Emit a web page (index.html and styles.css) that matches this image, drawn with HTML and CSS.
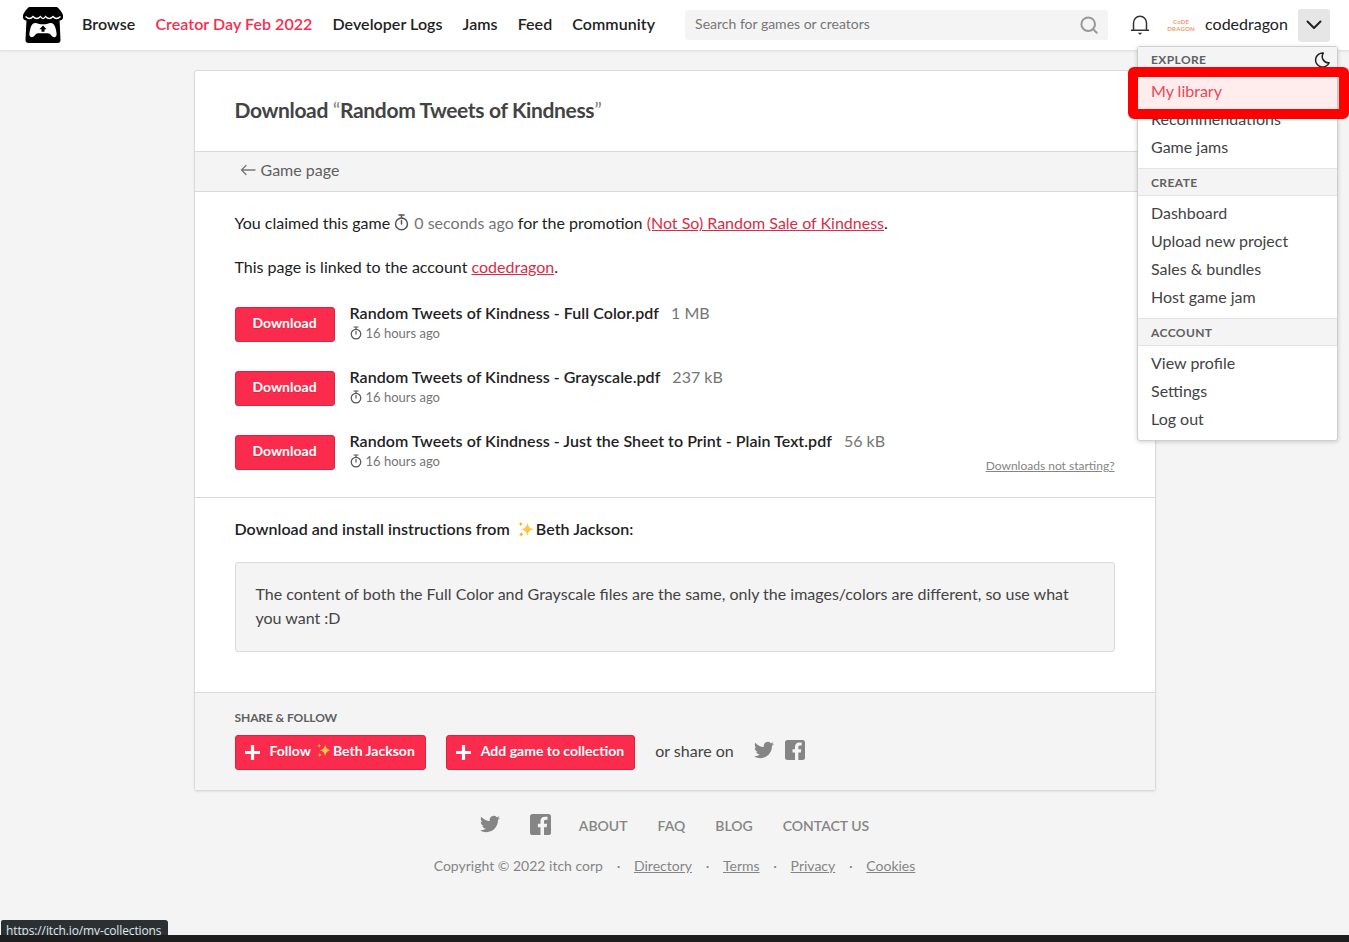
FILE: index.html
```html
<!DOCTYPE html>
<html lang="en">
<head>
<meta charset="utf-8">
<title>Download Random Tweets of Kindness</title>
<link rel="stylesheet" href="styles.css">
</head>
<body>
<svg class="defs" width="0" height="0" aria-hidden="true">
  <symbol id="i-clock" viewBox="0 0 14 16"><g fill="none" stroke="currentColor" stroke-width="1.4" stroke-linecap="round"><circle cx="7" cy="9.3" r="5.6"/><path d="M4.6 1h4.8M7 1v2.6M7 9.3V6.2"/></g></symbol>
  <symbol id="i-plus" viewBox="0 0 14 14"><path d="M7 0v14M0 7h14" fill="none" stroke="currentColor" stroke-width="3"/></symbol>
  <symbol id="i-spark" viewBox="0 0 18 18"><path fill="#fdc643" d="M11 1.500c.8 4.600 2.300 6.200 6.800 7.200-4.500 1-6 2.700-6.800 7.300-.8-4.600-2.300-6.300-6.800-7.300 4.500-1 6-2.600 6.800-7.200z"/><path fill="#f6ae2d" d="M4 .5c.3 1.700 1 2.400 2.600 2.800C5 3.700 4.300 4.400 4 6.100c-.3-1.700-1-2.400-2.600-2.800C3 2.900 3.700 2.200 4 .5zM4.500 11.500c.4 1.800 1 2.400 2.600 2.800-1.600.4-2.200 1-2.600 2.900-.4-1.900-1-2.500-2.600-2.900 1.600-.4 2.200-1 2.600-2.800z"/></symbol>
  <symbol id="i-tw" viewBox="0 0 24 24"><path fill="currentColor" d="M23.953 4.570a10 10 0 01-2.825.775 4.958 4.958 0 002.163-2.723c-.951.555-2.005.959-3.127 1.184a4.920 4.920 0 00-8.384 4.482C7.690 8.095 4.067 6.130 1.640 3.162a4.822 4.822 0 00-.666 2.475c0 1.710.870 3.213 2.188 4.096a4.904 4.904 0 01-2.228-.616v.060a4.923 4.923 0 003.946 4.827 4.996 4.996 0 01-2.212.085 4.936 4.936 0 004.604 3.417 9.867 9.867 0 01-6.102 2.105c-.390 0-.779-.023-1.170-.067a13.995 13.995 0 007.557 2.209c9.053 0 13.998-7.496 13.998-13.985 0-.210 0-.420-.015-.630A9.935 9.935 0 0024 4.590z"/></symbol>
  <symbol id="i-fb" viewBox="0 0 24 24"><path fill="currentColor" d="M3 0h18a3 3 0 013 3v18a3 3 0 01-3 3h-5v-9h3l.5-4H16V8.500c0-1.100.4-2 2-2h2V3h-3c-3.300 0-5 2-5 5v3H9v4h3v9H3a3 3 0 01-3-3V3a3 3 0 013-3z"/></symbol>
</svg>

<header class="topbar">
  <a class="logo" href="#" aria-label="itch.io">
    <svg viewBox="0 0 40 36" width="40" height="36">
      <path fill="#000" d="M6 0h28c2 1.500 5 5 6 8v2.500c0 1.800-1.700 3-3.400 3h-33.200C1.700 13.500 0 12.300 0 10.500V8c1-3 4-6.500 6-8z"/>
      <path fill="#000" d="M3.500 12h33l1 21c0 1.800-1 3-3 3h-29c-2 0-3-1.200-3-3z"/>
      <path fill="none" stroke="#fff" stroke-width="1.300" d="M2.500 9.500q4.300 4 7.500 0q3.700 4 7.500 0q2.500 4 5 0q3.800 4 7.500 0q3.200 4 7.500 0"/>
      <path fill="#fff" d="M12.500 16c2.300 0 3.500 1.300 5 1.300h5c1.500 0 2.700-1.300 5-1.300 2.800 0 4.300 2 5.200 5.700.8 3.300 1.400 6.300.4 7.600-1.300 1.500-3.300.9-4.800-.8-1.200-1.500-2-2.200-3.500-2.200h-9.600c-1.500 0-2.300.7-3.500 2.200-1.500 1.700-3.500 2.300-4.800.8-1-1.300-.4-4.300.4-7.600.9-3.700 2.400-5.700 5.200-5.700z"/>
      <path fill="#000" d="M20 18.500l3.600 3.700h-2.100v2.600h-3v-2.600h-2.100z"/>
    </svg>
  </a>
  <nav class="mainnav">
    <a href="#">Browse</a>
    <a href="#" class="hot">Creator Day Feb 2022</a>
    <a href="#">Developer Logs</a>
    <a href="#">Jams</a>
    <a href="#">Feed</a>
    <a href="#">Community</a>
  </nav>
  <div class="search">
    <span>Search for games or creators</span>
    <svg viewBox="0 0 20 20" width="20" height="20"><g fill="none" stroke="#999" stroke-width="2" stroke-linecap="round"><circle cx="9.200" cy="9.200" r="6.800"/><path d="M14.200 14.200l3.500 3.500"/></g></svg>
  </div>
  <div class="userbox">
    <svg class="bell" viewBox="0 0 20 22" width="20" height="22"><g fill="none" stroke="#333" stroke-width="1.500" stroke-linecap="round" stroke-linejoin="round"><path d="M1.500 16.300h17M3.500 16.300V9.500C3.500 5.300 6.200 2.200 10 2.200s6.500 3.100 6.500 6.800v7.300"/></g><path d="M7.800 18.800h4.400L10 21z" fill="#333"/></svg>
    <div class="avatar"><span>CoDE</span><span>DRAGON</span></div>
    <span class="username">codedragon</span>
    <button class="menubtn" aria-label="Menu"><svg viewBox="0 0 16 10" width="16" height="10"><path d="M1.500 1.500L8 8l6.500-6.500" fill="none" stroke="#222" stroke-width="2" stroke-linecap="round" stroke-linejoin="round"/></svg></button>
  </div>
</header>

<main class="card">
  <section class="card-title">
    <h2>Download <span class="q">“</span>Random Tweets of Kindness<span class="q">”</span></h2>
  </section>
  <div class="backbar">
    <svg viewBox="0 0 16 12" width="16" height="12"><path d="M15 6H1.500M6 1.500L1.500 6 6 10.500" fill="none" stroke="#777" stroke-width="1.300" stroke-linecap="round" stroke-linejoin="round"/></svg>
    <a href="#">Game page</a>
  </div>
  <section class="downloads">
    <p class="claim">You claimed this game <svg class="clock-lg"><use href="#i-clock"/></svg> <span class="muted">0 seconds ago</span> for the promotion <a href="#">(Not So) Random Sale of Kindness</a>.</p>
    <p class="claim second">This page is linked to the account <a href="#">codedragon</a>.</p>
    <div class="uploads">
      <div class="upload">
        <a class="btn" href="#">Download</a>
        <div class="info">
          <div class="fname"><strong>Random Tweets of Kindness - Full Color.pdf</strong><span class="size">1 MB</span></div>
          <div class="when"><svg class="clock"><use href="#i-clock"/></svg>16 hours ago</div>
        </div>
      </div>
      <div class="upload">
        <a class="btn" href="#">Download</a>
        <div class="info">
          <div class="fname"><strong>Random Tweets of Kindness - Grayscale.pdf</strong><span class="size">237 kB</span></div>
          <div class="when"><svg class="clock"><use href="#i-clock"/></svg>16 hours ago</div>
        </div>
      </div>
      <div class="upload">
        <a class="btn" href="#">Download</a>
        <div class="info">
          <div class="fname"><strong>Random Tweets of Kindness - Just the Sheet to Print - Plain Text.pdf</strong><span class="size">56 kB</span></div>
          <div class="when"><svg class="clock"><use href="#i-clock"/></svg>16 hours ago</div>
        </div>
        <a class="notstarting" href="#">Downloads not starting?</a>
      </div>
    </div>
  </section>
  <section class="instructions">
    <h3>Download and install instructions from <svg class="spark"><use href="#i-spark"/></svg>Beth Jackson:</h3>
    <div class="note">The content of both the Full Color and Grayscale files are the same, only the images/colors are different, so use what you want :D</div>
  </section>
  <section class="share">
    <div class="share-label">SHARE &amp; FOLLOW</div>
    <div class="share-row">
      <a class="btn btn-icon" href="#"><svg class="plus"><use href="#i-plus"/></svg>Follow <svg class="spark-sm"><use href="#i-spark"/></svg>Beth Jackson</a>
      <a class="btn btn-icon" href="#"><svg class="plus"><use href="#i-plus"/></svg>Add game to collection</a>
      <span class="orshare">or share on</span>
      <svg class="soc tw"><use href="#i-tw"/></svg>
      <svg class="soc fb"><use href="#i-fb"/></svg>
    </div>
  </section>
</main>

<footer class="foot">
  <div class="foot-links">
    <svg class="ftw"><use href="#i-tw"/></svg>
    <svg class="ffb"><use href="#i-fb"/></svg>
    <a href="#">ABOUT</a>
    <a href="#">FAQ</a>
    <a href="#">BLOG</a>
    <a href="#">CONTACT US</a>
  </div>
  <div class="copy">
    <span>Copyright © 2022 itch corp</span><i>·</i><a href="#">Directory</a><i>·</i><a href="#">Terms</a><i>·</i><a href="#">Privacy</a><i>·</i><a href="#">Cookies</a>
  </div>
</footer>

<aside class="menu">
  <div class="mhead first">EXPLORE
    <svg class="moon" viewBox="0 0 16 16" width="16" height="16"><path d="M9.300 1.100a7 7 0 1 0 5.800 9.600 6.200 6.200 0 0 1-5.800-9.600z" fill="none" stroke="#222" stroke-width="1.500" stroke-linejoin="round"/></svg>
  </div>
  <ul>
    <li class="active">My library</li>
    <li>Recommendations</li>
    <li>Game jams</li>
  </ul>
  <div class="mhead">CREATE</div>
  <ul>
    <li>Dashboard</li>
    <li>Upload new project</li>
    <li>Sales &amp; bundles</li>
    <li>Host game jam</li>
  </ul>
  <div class="mhead">ACCOUNT</div>
  <ul>
    <li>View profile</li>
    <li>Settings</li>
    <li>Log out</li>
  </ul>
</aside>
<div class="highlight"></div>

<div class="statusurl">https://itch.io/my-collections</div>
<div class="bottombar"></div>
</body>
</html>
```
FILE: styles.css
```css
* { box-sizing: border-box; }
html, body { margin: 0; padding: 0; height: 942px; overflow: hidden; }
body {
  background: #f4f4f4;
  font-family: Lato, "Liberation Sans", sans-serif;
  font-size: 16px;
  color: #222;
  position: relative;
}
a { color: inherit; }
.defs { position: absolute; }

/* header */
.topbar {
  height: 51px;
  background: #fff;
  border-bottom: 1px solid #e4e4e4;
  box-shadow: 0 1px 2px rgba(0,0,0,.06);
  display: flex;
  align-items: center;
  padding-left: 23px;
}
.logo { display: block; width: 40px; height: 36px; margin-right: 19px; }
.mainnav { display: flex; gap: 20px; font-weight: 600; padding-bottom: 4px; letter-spacing: .06px; }
.mainnav a { text-decoration: none; color: #222; }
.mainnav a.hot { color: #fa2b4d; }
.search {
  margin-left: 30px;
  width: 423px;
  height: 30px;
  background: #f4f4f4;
  border-radius: 3px;
  display: flex;
  align-items: center;
  justify-content: space-between;
  padding: 0 9px 0 10px;
  font-size: 14px;
  color: #777;
}
.search span { padding-bottom: 4px; }
.userbox { display: flex; align-items: center; margin-left: 22px; }
.bell { display: block; margin-right: 18px; }
.avatar {
  width: 26px;
  margin-right: 11px;
  display: flex;
  flex-direction: column;
  align-items: center;
  font-size: 6px;
  line-height: 7px;
  font-weight: 700;
  color: #eb9a70;
  letter-spacing: .2px;
}
.username { font-size: 16px; margin-right: 10px; padding-bottom: 4px; }
.menubtn {
  width: 32px;
  height: 33px;
  background: #e6e6e6;
  border: 0;
  border-radius: 3px;
  padding: 0;
  display: flex;
  align-items: center;
  justify-content: center;
}

/* card */
.card {
  width: 962px;
  margin: 19px auto 0;
  background: #fff;
  border: 1px solid #dadada;
  border-radius: 3px;
  box-shadow: 0 1px 2px rgba(0,0,0,.08);
}
.card-title { height: 80px; padding: 0 40px 3px; display: flex; align-items: center; }
.card-title h2 { margin: 0; font-size: 21px; font-weight: 700; color: #434343; letter-spacing: -.35px; }
.card-title .q { font-weight: 400; color: #858585; }
.backbar {
  height: 41px;
  background: #f4f4f4;
  border-top: 1px solid #dadada;
  border-bottom: 1px solid #dadada;
  padding: 0 0 4px 45px;
  display: flex;
  align-items: center;
  gap: 5px;
  color: #606060;
}
.backbar a { text-decoration: none; }
.downloads { padding: 19px 40px 0; height: 306px; border-bottom: 1px solid #dadada; }
.claim { margin: 0; line-height: 24px; }
.claim.second { margin-top: 20px; }
.claim a { color: #da2c49; }
.muted { color: #757575; }
.clock-lg { width: 15px; height: 17px; color: #555; vertical-align: -2px; margin-right: 1px; }
.uploads { margin-top: 28px; }
.upload { display: flex; height: 64px; position: relative; }
.btn {
  background: #fa2b4d;
  border: 1px solid #e0223f;
  border-radius: 3px;
  color: #fff;
  font-weight: 700;
  font-size: 14px;
  text-decoration: none;
  text-shadow: 0 1px 0 rgba(0,0,0,.12);
  display: flex;
  align-items: center;
  justify-content: center;
  height: 35px;
  padding-bottom: 4px;
}
.upload .btn { width: 100px; }
.info { margin-left: 15px; }
.fname { line-height: 20px; margin-top: -4px; }
.fname strong { font-weight: 600; letter-spacing: .05px; }
.size { margin-left: 12px; color: #757575; }
.when { font-size: 13px; color: #757575; line-height: 20px; display: flex; align-items: center; }
.clock { width: 12px; height: 14px; margin-right: 4px; color: #555; }
.notstarting { margin-left: auto; margin-top: 23px; font-size: 12px; color: #858585; height: 16px; }
.instructions { padding: 21px 40px 40px; height: 194px; }
.instructions h3 { margin: 0; font-size: 16px; font-weight: 600; line-height: 20px; letter-spacing: .05px; }
.spark { width: 17px; height: 17px; vertical-align: -3px; margin: 0 2px 0 3px; }
.note {
  margin-top: 23px;
  height: 90px;
  background: #f4f4f4;
  border: 1px solid #dadada;
  border-radius: 3px;
  padding: 19px 20px;
  line-height: 24px;
  color: #434343;
}
.share { height: 98px; background: #f4f4f4; border-top: 1px solid #dadada; padding: 17px 40px 0; }
.share-label { font-size: 12px; font-weight: 700; color: #606060; line-height: 15px; letter-spacing: -.1px; }
.share-row { display: flex; align-items: center; margin-top: 10px; }
.btn-icon { padding: 0 10px 4px 9px; margin-right: 20px; justify-content: flex-start; }
.plus { width: 15px; height: 15px; margin-right: 10px; margin-top: 3px; }
.spark-sm { width: 15px; height: 15px; margin: 0 2px 0 5px; }
.orshare { margin-right: 20px; color: #434343; padding-bottom: 5px; }
.soc { color: #858585; margin-bottom: 5px; }
.soc.tw { width: 20px; height: 20px; margin-right: 11px; }
.soc.fb { width: 20px; height: 20px; }

/* footer */
.foot { text-align: center; color: #858585; font-size: 14px; }
.foot-links { display: flex; justify-content: center; align-items: center; margin-top: 22px; height: 24px; font-weight: 600; gap: 30px; }
.foot-links a { text-decoration: none; }
.ftw { width: 20px; height: 20px; margin-right: 0; margin-bottom: 2px; }
.ffb { width: 21px; height: 21px; margin-right: -2px; margin-bottom: 2px; }
.copy { margin-top: 19px; font-size: 14px; line-height: 20px; color: #858585; }
.copy i { font-style: normal; margin: 0 13.700px; }

/* user menu */
.menu {
  position: absolute;
  left: 1137px;
  top: 46px;
  width: 201px;
  height: 395px;
  background: #fff;
  border: 1px solid #cfcfcf;
  border-radius: 3px;
  box-shadow: 0 1px 4px rgba(0,0,0,.18);
  color: #434343;
}
.mhead {
  height: 28px;
  background: #f4f4f4;
  border-top: 1px solid #e4e4e4;
  border-bottom: 1px solid #e4e4e4;
  padding-left: 13px;
  display: flex;
  align-items: center;
  font-size: 12px;
  font-weight: 700;
  letter-spacing: .4px;
  color: #606060;
  position: relative;
}
.mhead.first { height: 27px; border-top: 0; padding-bottom: 2px; }
.moon { position: absolute; right: 7px; top: 5px; }
.menu ul { list-style: none; margin: 0; padding: 3px 0 7px; }
.menu li { height: 28px; line-height: 28px; padding-left: 13px; }
.menu li.active { color: #ea4c5e; }
.highlight {
  position: absolute;
  left: 1128px;
  top: 67px;
  width: 221px;
  height: 52px;
  border: 10px solid #ff0000;
  border-radius: 6px;
  background: rgba(255, 0, 0, .07);
}

/* browser status */
.statusurl {
  position: absolute;
  left: 1px;
  top: 920px;
  width: 167px;
  height: 15px;
  overflow: hidden;
  background: #2c3033;
  border-radius: 2px 3px 0 0;
  color: #dfe6ec;
  font-family: "Open Sans", sans-serif;
  font-size: 12px;
  letter-spacing: -.13px;
  line-height: 22px;
  padding-left: 5px;
  white-space: nowrap;
}
.bottombar { position: absolute; left: 0; right: 0; top: 935px; height: 7px; background: #1e1e1e; }
```
